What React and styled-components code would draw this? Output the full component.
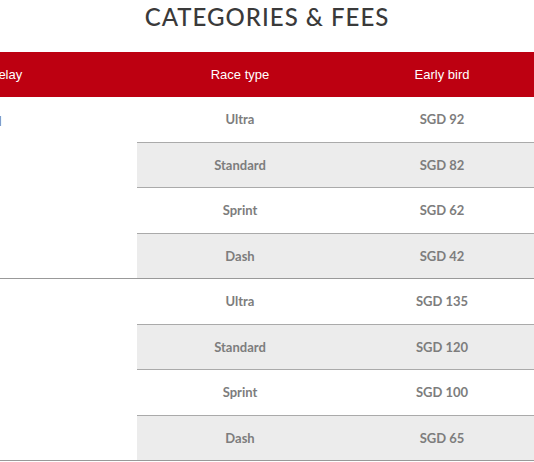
import React from "react";
import styled, { createGlobalStyle } from "styled-components";

const GlobalStyle = createGlobalStyle`
  html, body {
    margin: 0;
    padding: 0;
    background: #fff;
    overflow: hidden;
  }
`;

const Page = styled.div`
  width: 534px;
  height: 462px;
  overflow: hidden;
`;

const Title = styled.h2`
  margin: 0;
  padding-top: 2px;
  height: 52px;
  box-sizing: border-box;
  line-height: 30px;
  text-align: center;
  font-family: "Lato", "Open Sans", sans-serif;
  font-weight: 500;
  font-size: 24px;
  letter-spacing: 1px;
  color: #3a3a3a;
`;

const Table = styled.div`
  margin-left: -63px;
  width: 604px;
`;

const HeaderRow = styled.div`
  display: grid;
  grid-template-columns: 200px 206px 198px;
  height: 45px;
  background: #bd0011;
  align-items: center;
  font-family: "Liberation Sans", Arial, sans-serif;
  font-size: 13px;
  color: #fff;
`;

const HeadCell = styled.div`
  text-align: ${(p) => p.$align || "center"};
  padding-left: ${(p) => p.$pad || 0}px;
`;

const Group = styled.div`
  display: grid;
  grid-template-columns: 200px 404px;
  border-bottom: 1px solid #999;
`;

const GroupLabel = styled.div`
  padding-top: 16px;
  padding-left: 8px;
  font-family: "Lato", "Open Sans", sans-serif;
  font-weight: 700;
  font-size: 13px;
  color: #777;
`;

const Rows = styled.div`
  display: flex;
  flex-direction: column;
`;

const Row = styled.div`
  display: grid;
  grid-template-columns: 206px 198px;
  align-items: center;
  height: 44.5px;
  border-bottom: ${(p) => (p.$last ? "none" : "1px solid #aaa")};
  background: ${(p) => (p.$shaded ? "#ececec" : "#fff")};
  font-family: "Lato", "Open Sans", sans-serif;
  font-weight: 700;
  font-size: 13px;
  color: #7d7d7d;
`;

const Cell = styled.div`
  text-align: center;
`;

const groups = [
  {
    label: "Individual",
    rows: [
      ["Ultra", "SGD 92"],
      ["Standard", "SGD 82"],
      ["Sprint", "SGD 62"],
      ["Dash", "SGD 42"],
    ],
  },
  {
    label: "",
    rows: [
      ["Ultra", "SGD 135"],
      ["Standard", "SGD 120"],
      ["Sprint", "SGD 100"],
      ["Dash", "SGD 65"],
    ],
  },
];

export default function App() {
  return (
    <Page>
      <GlobalStyle />
      <Title>CATEGORIES &amp; FEES</Title>
      <Table>
        <HeaderRow>
          <HeadCell $align="left" $pad={52}>Relay</HeadCell>
          <HeadCell>Race type</HeadCell>
          <HeadCell>Early bird</HeadCell>
        </HeaderRow>
        {groups.map((g, gi) => (
          <Group key={gi}>
            <GroupLabel>{g.label}</GroupLabel>
            <Rows>
              {g.rows.map((r, i) => (
                <Row key={i} $shaded={i % 2 === 1} $last={i === g.rows.length - 1}>
                  <Cell>{r[0]}</Cell>
                  <Cell>{r[1]}</Cell>
                </Row>
              ))}
            </Rows>
          </Group>
        ))}
      </Table>
    </Page>
  );
}
